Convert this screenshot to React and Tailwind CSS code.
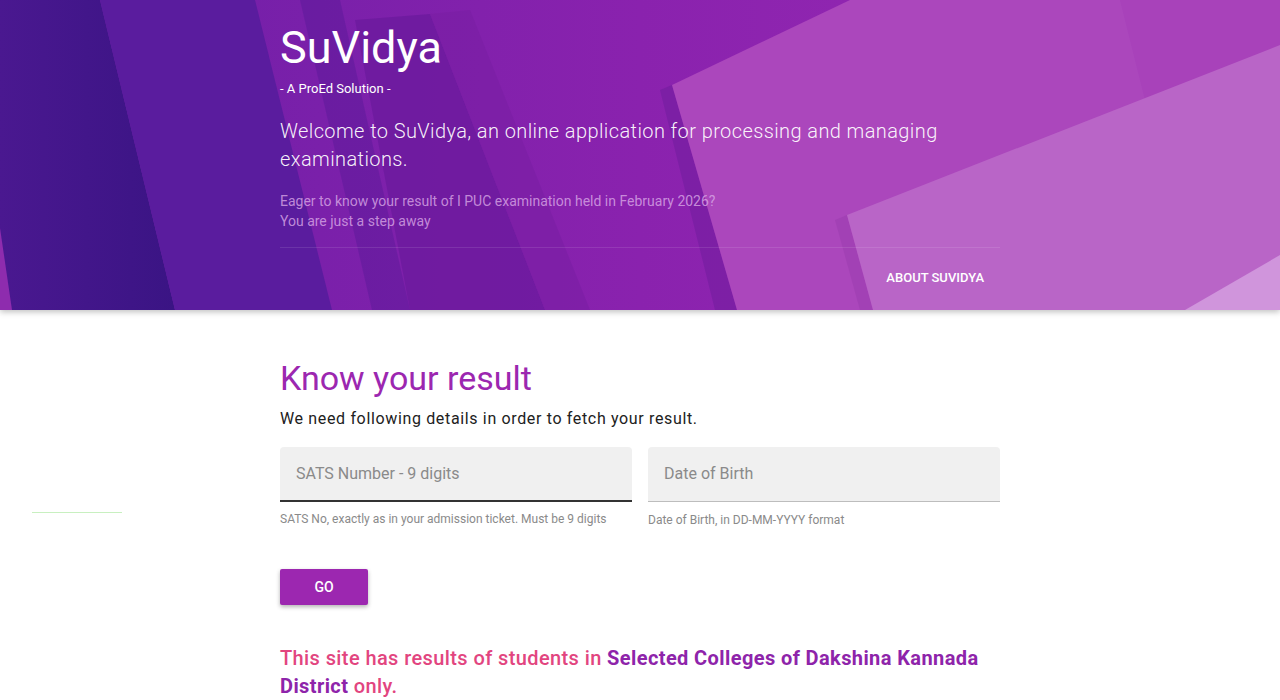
import React from 'react';

function HeroShapes() {
  return (
    <svg className="absolute inset-0 h-full w-full" viewBox="0 0 1280 310" preserveAspectRatio="none">
      <defs>
        <linearGradient id="base" x1="0" y1="0" x2="1" y2="0">
          <stop offset="0" stopColor="#6a1ea6" />
          <stop offset="0.5" stopColor="#8a22ae" />
          <stop offset="1" stopColor="#9a2cb4" />
        </linearGradient>
        <linearGradient id="dark" x1="0" y1="0" x2="1" y2="0">
          <stop offset="0" stopColor="#4a1890" />
          <stop offset="1" stopColor="#3a1484" />
        </linearGradient>
      </defs>
      <rect width="1280" height="310" fill="url(#base)" />
      <polygon points="0,0 100,0 175,310 0,310" fill="url(#dark)" />
      <polygon points="0,228 12,310 0,310" fill="#8e2cae" />
      <polygon points="100,0 255,0 332,310 175,310" fill="#5a1c9e" />
      <polygon points="300,0 340,0 410,310 372,310" fill="#4c1692" opacity="0.35" />
      <polygon points="355,20 430,14 545,310 410,310" fill="#6c1a9e" opacity="0.8" />
      <polygon points="430,14 470,10 590,310 545,310" fill="#7a1ea4" opacity="0.6" />
      <polygon points="660,90 672,85 737,310 715,310" fill="#6e1b9c" opacity="0.5" />
      <polygon points="672,85 850,0 1280,0 1280,310 737,310" fill="#ab47bc" />
      <polygon points="1120,0 1280,0 1280,60 1150,120" fill="#a640b9" opacity="0.6" />
      <polygon points="835,220 847,215 873,310 860,310" fill="#9a3cae" opacity="0.5" />
      <polygon points="847,215 1280,45 1280,310 873,310" fill="#b965c7" />
      <polygon points="1185,310 1280,255 1280,310" fill="#d095dc" />
    </svg>
  );
}

export default function App() {
  return (
    <div className="min-h-screen bg-white font-['Roboto',sans-serif]">
      <header className="relative h-[310px] overflow-hidden shadow-[0_2px_6px_rgba(0,0,0,0.25)]">
        <HeroShapes />
        <div className="relative mx-auto w-[720px] pt-[20px] text-white">
          <h1 className="text-[45px] font-normal leading-[56px]">SuVidya</h1>
          <p className="mt-[5px] text-[13px] leading-[16px]">- A ProEd Solution -</p>
          <p className="mt-[20px] text-[20px] font-light leading-[28px] tracking-[0.4px] text-white/95">
            Welcome to SuVidya, an online application for processing and managing examinations.
          </p>
          <p className="mt-[18px] text-[14px] leading-[20px] text-[#d9a8e6]/80">
            Eager to know your result of I PUC examination held in February 2026?
            <br />
            You are just a step away
          </p>
          <div className="mt-[16px] border-t border-white/10" />
          <div className="flex justify-end pt-[12px]">
            <button className="h-[36px] rounded-[2px] px-4 text-[13px] font-medium uppercase">About SuVidya</button>
          </div>
        </div>
      </header>

      <div className="flex">
        <div className="w-[280px] shrink-0 pt-[202px] pl-[32px]">
          <div className="h-px w-[90px] bg-[#c8f0c0]" />
        </div>
        <main className="w-[720px] pt-[48px]">
          <h2 className="text-[34px] font-normal leading-[40px] text-[#9c27b0]">Know your result</h2>
          <p className="mt-[11px] text-[16px] leading-[20px] tracking-[0.65px] text-[#212121]">
            We need following details in order to fetch your result.
          </p>
          <div className="mt-[18px] grid grid-cols-2 gap-4">
            <div>
              <div className="flex h-[55px] items-center rounded-t-[4px] border-b-2 border-[#333] bg-[#f0f0f0] px-4 text-[16px] text-[#8a8a8a]">
                SATS Number - 9 digits
              </div>
              <p className="mt-[9px] text-[12px] leading-[16px] text-[#8a8a8a]">
                SATS No, exactly as in your admission ticket. Must be 9 digits
              </p>
            </div>
            <div>
              <div className="flex h-[55px] items-center rounded-t-[4px] border-b border-[#bdbdbd] bg-[#f0f0f0] px-4 text-[16px] text-[#8a8a8a]">
                Date of Birth
              </div>
              <p className="mt-[10px] text-[12px] leading-[16px] text-[#8a8a8a]">Date of Birth, in DD-MM-YYYY format</p>
            </div>
          </div>
          <button className="mt-[41px] h-[36px] w-[88px] rounded-[2px] bg-[#9c27b0] text-[14px] font-medium text-white shadow-[0_2px_4px_rgba(0,0,0,0.3)]">
            GO
          </button>
          <p className="mt-[39px] text-[20px] font-medium leading-[28px] tracking-[0.4px] text-[#e2457f]">
            <span>This site has results of students in </span>
            <span className="font-bold text-[#8e24aa]">Selected Colleges of Dakshina Kannada</span>{' '}
            <span className="font-bold text-[#8e24aa]">District</span>
            <span> only.</span>
          </p>
        </main>
      </div>
    </div>
  );
}
